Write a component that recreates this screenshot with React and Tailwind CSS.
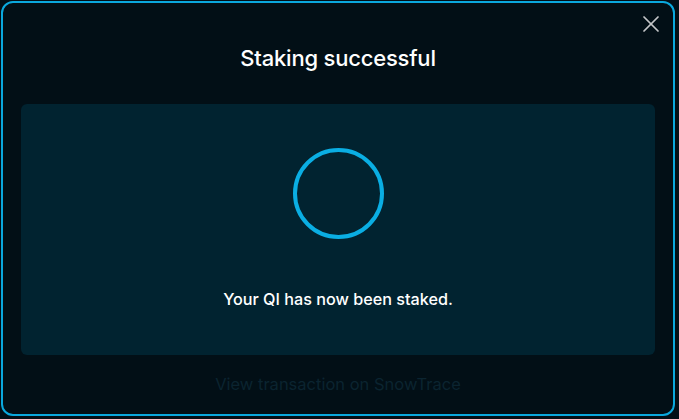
import { X } from "lucide-react"

const App = () => {
  return (
    <div className="w-[679px] h-[419px] bg-[#020f16] pl-[1px] pt-[1px] font-['Inter',sans-serif]">
      <div className="relative w-[674px] h-[415px] border-2 border-[#0aa8dd] rounded-[12px] bg-[#020f16] flex flex-col px-[18px]">
        <button className="absolute top-[7px] right-[8px] text-[#c4c6c8]">
          <X size={28} strokeWidth={1.5} />
        </button>

        <h2 className="mt-[41px] text-center text-white text-[22px] font-medium leading-[28px] tracking-[-0.2px]">
          Staking successful
        </h2>

        <div className="mt-[32px] h-[251px] rounded-[6px] bg-[#012330] flex flex-col items-center">
          <div className="mt-[44px] w-[91px] h-[91px] rounded-full border-[4px] border-[#0aaee3]" />
          <p className="mt-[50px] text-white text-[16.2px] font-medium leading-[20px]">
            Your QI has now been staked.
          </p>
        </div>

        <a className="mt-[18px] text-center text-[#0b2430] text-[16.5px] leading-[22px]">
          View transaction on SnowTrace
        </a>
      </div>
    </div>
  )
}

export default App
